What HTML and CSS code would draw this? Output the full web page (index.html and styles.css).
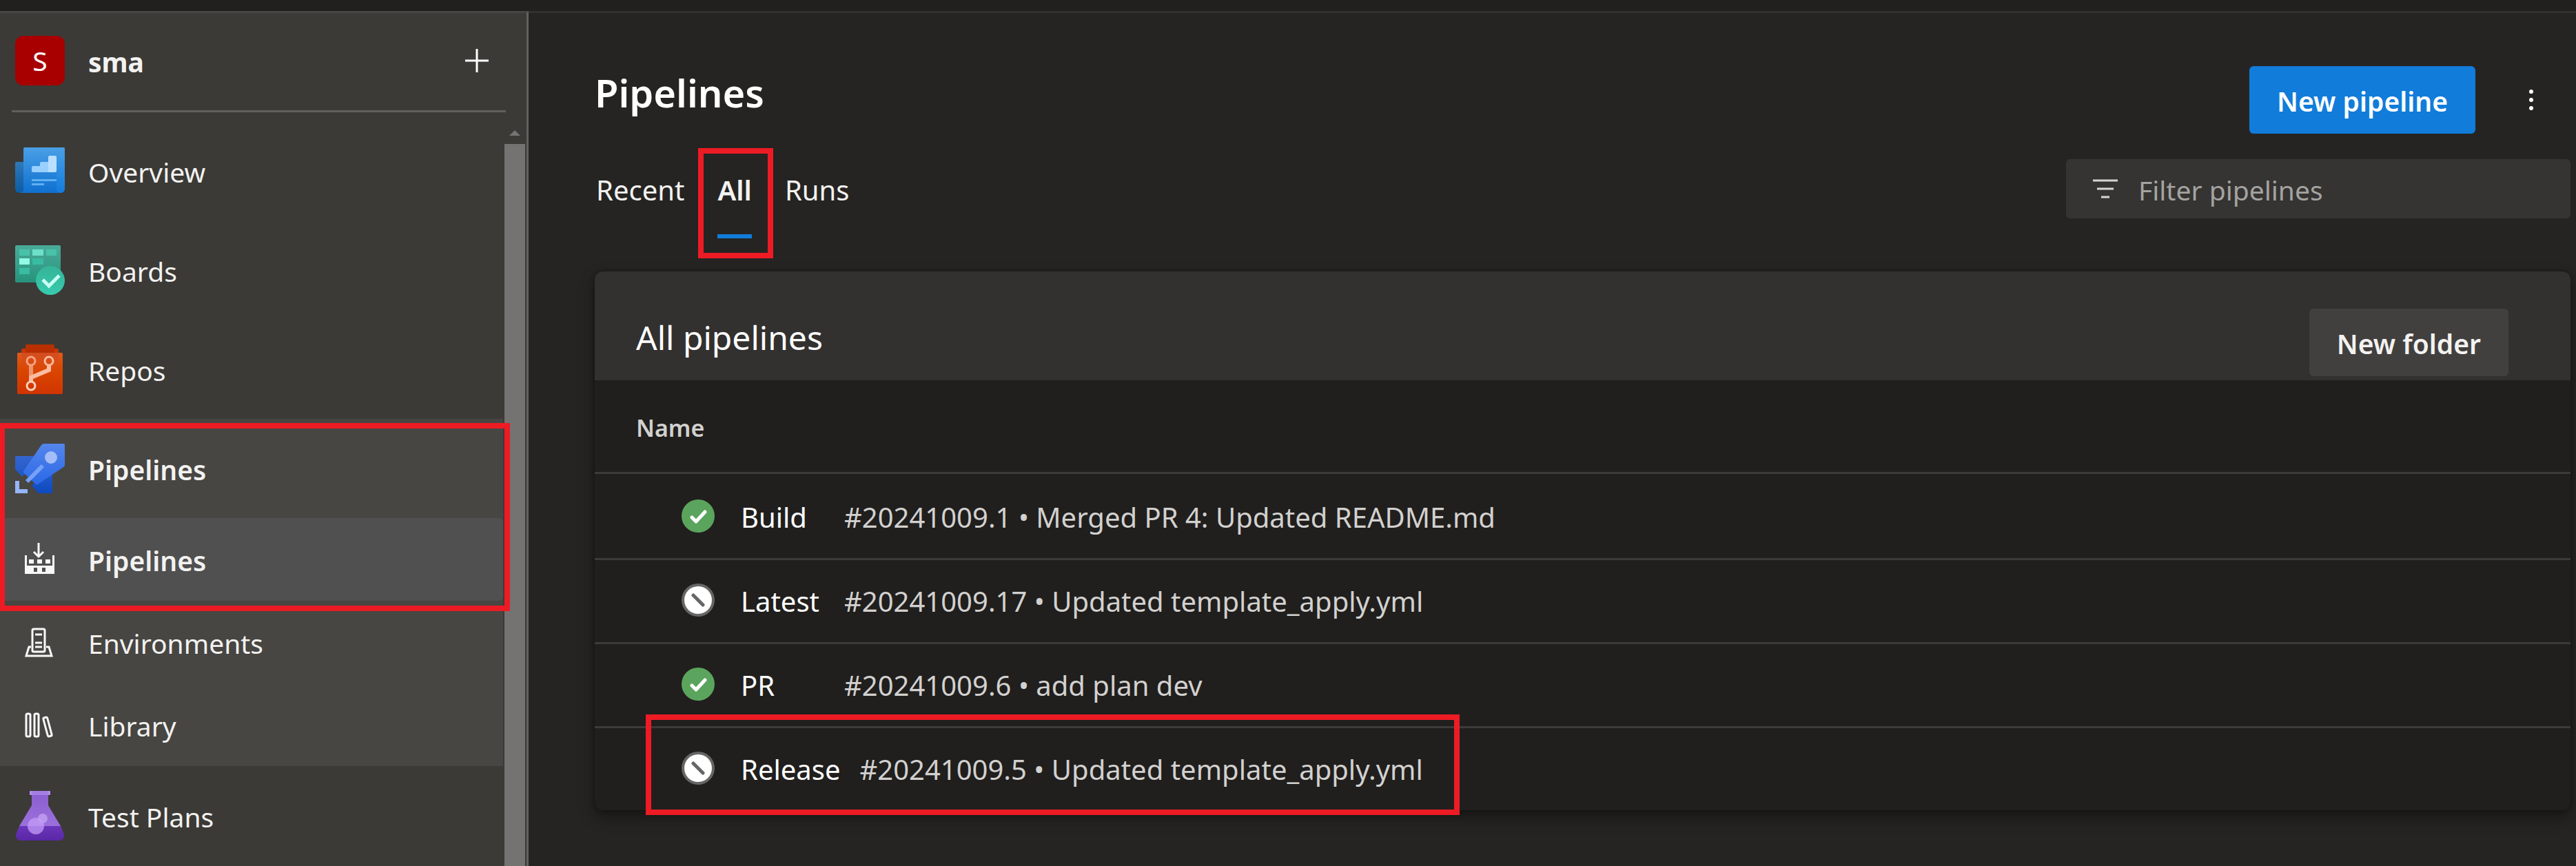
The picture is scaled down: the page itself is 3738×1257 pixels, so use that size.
FILE: index.html
```html
<!DOCTYPE html>
<html lang="en">
<head>
<meta charset="utf-8">
<title>Pipelines</title>
<link rel="stylesheet" href="styles.css">
</head>
<body>
<div class="topbar"></div>
<div class="layout">
  <aside class="sidebar">
    <div class="project">
      <span class="project-avatar">S</span>
      <a class="project-name" href="#">sma</a>
      <button class="project-add" type="button" aria-label="Add">
        <svg width="34" height="34" viewBox="0 0 34 34"><path d="M17 0v34M0 17h34" stroke="#fff" stroke-width="3"/></svg>
      </button>
    </div>
    <div class="nav-area">
      <nav class="nav">
        <a class="nav-item" href="#">
          <svg class="nav-icon" viewBox="0 0 72 72">
            <defs>
              <linearGradient id="ov1" x1="0" y1="0" x2="0" y2="1"><stop offset="0" stop-color="#4a9fe6"/><stop offset="1" stop-color="#0f70cf"/></linearGradient>
              <linearGradient id="ov2" x1="0" y1="0" x2="0" y2="1"><stop offset="0" stop-color="#2f78b8"/><stop offset="1" stop-color="#0b5ba6"/></linearGradient>
              <linearGradient id="ov3" x1="0" y1="0" x2="0" y2="1"><stop offset="0" stop-color="#4a9fe6"/><stop offset="1" stop-color="#127cdd"/></linearGradient>
            </defs>
            <path d="M12 4a2 2 0 0 1 2-2h56a2 2 0 0 1 2 2v58a6 6 0 0 1-6 6H6c4 0 6-3 6-6z" fill="url(#ov1)"/>
            <path d="M60 2h10a2 2 0 0 1 2 2v58a6 6 0 0 1-12 0z" fill="url(#ov3)"/>
            <path d="M2 23h10v39a6 6 0 0 1-12 0V25a2 2 0 0 1 2-2z" fill="url(#ov2)"/>
            <path d="M24 31a2 2 0 0 1 2-2h10v-4a2 2 0 0 1 2-2h10v15H26a2 2 0 0 1-2-2z" fill="#99d0ff"/>
            <path d="M48 16a2 2 0 0 1 2-2h8a2 2 0 0 1 2 2v20a2 2 0 0 1-2 2H48z" fill="#b8dfff"/>
            <path d="M24 48h36v3H24zM24 54h18v3H24z" fill="#5eb0f3"/>
          </svg>
          <span>Overview</span>
        </a>
        <a class="nav-item" href="#">
          <svg class="nav-icon" viewBox="0 0 72 72">
            <defs>
              <linearGradient id="bo1" x1="0" y1="0" x2="0" y2="1"><stop offset="0" stop-color="#4aab99"/><stop offset="1" stop-color="#27937b"/></linearGradient>
              <linearGradient id="bo2" x1="0" y1="0" x2="0" y2="1"><stop offset="0" stop-color="#36b398"/><stop offset="1" stop-color="#37cbae"/></linearGradient>
            </defs>
            <rect width="66" height="54" rx="2" fill="url(#bo1)"/>
            <path d="M6 6h15v9H6zM45 6h15v9H45z" fill="#48c3aa"/>
            <path d="M25 6h16v9H25z" fill="#6ee0ca"/>
            <path d="M6 19h15v9H6z" fill="#92fbe6"/>
            <path d="M25 19h16v9H25zM6 33h15v9H6z" fill="#39bca1"/>
            <circle cx="51" cy="51" r="21" fill="url(#bo2)"/>
            <path d="M40 50l9 9 15-15" fill="none" stroke="#c8fff4" stroke-width="5"/>
          </svg>
          <span>Boards</span>
        </a>
        <a class="nav-item" href="#">
          <svg class="nav-icon" viewBox="0 0 72 72">
            <defs>
              <linearGradient id="re1" x1="0" y1="0" x2="0" y2="1"><stop offset="0" stop-color="#de5a1e"/><stop offset=".4" stop-color="#da4700"/><stop offset="1" stop-color="#d13400"/></linearGradient>
              <linearGradient id="re2" x1="0" y1="0" x2="0" y2="1"><stop offset="0" stop-color="#d24d22"/><stop offset="1" stop-color="#da4700" stop-opacity="0"/></linearGradient>
            </defs>
            <path d="M15 8V2a2 2 0 0 1 2-2h38a2 2 0 0 1 2 2v6z" fill="#b82f00"/>
            <path d="M9 14V8a2 2 0 0 1 2-2h50a2 2 0 0 1 2 2v6z" fill="#cc3500"/>
            <path d="M15 6h42v6H15z" fill="#b92e00"/>
            <rect x="3" y="12" width="66" height="60" rx="2" fill="url(#re1)"/>
            <path d="M9 12h54v34H9z" fill="url(#re2)"/>
            <path d="M23 31v15" stroke="#ee9470" stroke-width="6"/>
            <path d="M49 30v7L23 48v6" fill="none" stroke="#fcbca2" stroke-width="6"/>
            <circle cx="23" cy="24" r="6" fill="none" stroke="#f6a081" stroke-width="3"/>
            <circle cx="49" cy="24" r="6" fill="none" stroke="#fcb99e" stroke-width="3"/>
            <circle cx="23" cy="60" r="6" fill="none" stroke="#ffd0bd" stroke-width="3"/>
          </svg>
          <span>Repos</span>
        </a>
        <div class="nav-group">
          <a class="nav-item strong" href="#">
            <svg class="nav-icon" viewBox="0 0 72 72">
              <defs>
                <linearGradient id="pi1" x1="0" y1="0" x2="0" y2="1"><stop offset="0" stop-color="#5485ec"/><stop offset="1" stop-color="#2a69e6"/></linearGradient>
                <linearGradient id="pi2" x1="0" y1="0" x2="0" y2="1"><stop offset="0" stop-color="#3566cf"/><stop offset="1" stop-color="#0d4ac0"/></linearGradient>
              </defs>
              <path d="M2 18h26L14 44l-4 4L0 37V20a2 2 0 0 1 2-2zM54 44v26a2 2 0 0 1-2 2H34L24 61l8-8z" fill="url(#pi2)"/>
              <path d="M38 2q2-2 4-2h28a2 2 0 0 1 2 2v29q0 2-2 3L33 59q-2 1-3 0L13 43q-2-2-1-3z" fill="url(#pi1)"/>
              <circle cx="52" cy="20" r="9" fill="#a3bdf8"/>
              <path d="M17 55l23-23" stroke="#76a1fa" stroke-width="6"/>
              <path d="M0 54h6v12h12v6H0z" fill="#95b5f8"/>
            </svg>
            <span>Pipelines</span>
          </a>
          <a class="nav-item sub selected strong" href="#">
            <svg class="nav-icon" viewBox="0 0 72 72" fill="none">
              <path d="M34 12v19M27 25l7 7 7-7" stroke="#f8f8f8" stroke-width="3"/>
              <path fill="#f8f8f8" fill-rule="evenodd" d="M14 30h3v15h37V30h3v27H14zM27 48v6h5v-6zM39 48v6h5v-6zM20 36h7v6h-7zM32 36h7v6h-7zM44 36h7v6h-7z"/>
            </svg>
            <span>Pipelines</span>
          </a>
          <a class="nav-item sub" href="#">
            <svg class="nav-icon" viewBox="0 0 72 72" fill="none" stroke="#f8f8f8" stroke-width="3">
              <rect x="25" y="17" width="18" height="33" rx="2"/>
              <path d="M29 25h10M29 37h10M29 43h10M23 43h-3l-4 13h37l-4-13h-4"/>
            </svg>
            <span>Environments</span>
          </a>
          <a class="nav-item sub" href="#">
            <svg class="nav-icon" viewBox="0 0 72 72" fill="none" stroke="#f8f8f8" stroke-width="3">
              <rect x="16" y="20" width="6" height="33" rx="2"/>
              <rect x="28" y="20" width="6" height="33" rx="2"/>
              <rect x="44" y="25" width="6" height="28" rx="2" transform="rotate(-15 47 39)"/>
            </svg>
            <span>Library</span>
          </a>
          <div class="callout callout-nav"></div>
        </div>
        <a class="nav-item" href="#">
          <svg class="nav-icon" viewBox="0 0 72 72">
            <defs>
              <linearGradient id="te1" x1="0" y1="0" x2="0" y2="1"><stop offset="0" stop-color="#8c5fd0"/><stop offset="1" stop-color="#9c70dc"/></linearGradient>
              <linearGradient id="te2" x1="0" y1="0" x2="0" y2="1"><stop offset="0" stop-color="#6b36ba"/><stop offset="1" stop-color="#5a27a6"/></linearGradient>
            </defs>
            <path d="M24 4h24v17l18 30H6l18-30z" fill="url(#te1)"/>
            <path d="M6 51h60l4 10c3 6-1 11-6 11H8c-5 0-9-5-6-11z" fill="url(#te2)"/>
            <rect x="21" width="30" height="6" rx="1" fill="#b28ff0"/>
            <path d="M24 0h24v6H24z" fill="#a47ee2"/>
            <circle cx="40" cy="40" r="7" fill="#c3a2f0" opacity=".8"/>
            <circle cx="30" cy="51" r="12" fill="#c49cf8" opacity=".75"/>
          </svg>
          <span>Test Plans</span>
        </a>
      </nav>
      <div class="scroll" aria-hidden="true">
        <svg class="scroll-arrow" width="16" height="8" viewBox="0 0 16 8"><path d="M8 0l8 8H0z" fill="#757472"/></svg>
        <div class="scroll-thumb"></div>
      </div>
    </div>
  </aside>

  <main class="main">
    <header class="page-head">
      <h1>Pipelines</h1>
      <button class="btn btn-primary" type="button">New pipeline</button>
      <button class="more" type="button" aria-label="More actions">
        <svg width="8" height="32" viewBox="0 0 8 32" fill="#fff"><circle cx="4" cy="4" r="3"/><circle cx="4" cy="16" r="3"/><circle cx="4" cy="28" r="3"/></svg>
      </button>
    </header>

    <div class="toolbar">
      <div class="tabs" role="tablist">
        <button class="tab" type="button" role="tab">Recent</button>
        <button class="tab active" type="button" role="tab" aria-selected="true">All<span class="callout callout-tab"></span></button>
        <button class="tab" type="button" role="tab">Runs</button>
      </div>
      <label class="filter">
        <svg width="36" height="28" viewBox="0 0 36 28"><path d="M0 2h36M6 14h24M12 26h12" stroke="#d6d5d3" stroke-width="3"/></svg>
        <input type="text" placeholder="Filter pipelines" aria-label="Filter pipelines">
      </label>
    </div>

    <section class="card">
      <div class="card-head">
        <h2>All pipelines</h2>
        <button class="btn" type="button">New folder</button>
      </div>
      <table class="runs">
        <thead><tr><th scope="col">Name</th></tr></thead>
        <tbody>
          <tr><td><div class="run">
            <svg class="status" viewBox="0 0 48 48"><circle cx="24" cy="24" r="24" fill="#5aa45e"/><path d="M15 26l6 6 13-14" fill="none" stroke="#fff" stroke-width="5" stroke-linecap="round" stroke-linejoin="round"/></svg>
            <a class="run-name" href="#">Build</a><a class="run-last" href="#">#20241009.1 • Merged PR 4: Updated README.md</a>
          </div></td></tr>
          <tr><td><div class="run">
            <svg class="status" viewBox="0 0 48 48"><circle cx="24" cy="24" r="24" fill="#666"/><circle cx="24" cy="24" r="20" fill="#fff"/><path d="M17 17l14 14" stroke="#666" stroke-width="5" stroke-linecap="round"/></svg>
            <a class="run-name" href="#">Latest</a><a class="run-last" href="#">#20241009.17 • Updated template_apply.yml</a>
          </div></td></tr>
          <tr><td><div class="run">
            <svg class="status" viewBox="0 0 48 48"><circle cx="24" cy="24" r="24" fill="#5aa45e"/><path d="M15 26l6 6 13-14" fill="none" stroke="#fff" stroke-width="5" stroke-linecap="round" stroke-linejoin="round"/></svg>
            <a class="run-name" href="#">PR</a><a class="run-last" href="#">#20241009.6 • add plan dev</a>
          </div></td></tr>
          <tr><td><div class="run">
            <svg class="status" viewBox="0 0 48 48"><circle cx="24" cy="24" r="24" fill="#666"/><circle cx="24" cy="24" r="20" fill="#fff"/><path d="M17 17l14 14" stroke="#666" stroke-width="5" stroke-linecap="round"/></svg>
            <a class="run-name" href="#">Release</a><a class="run-last" href="#">#20241009.5 • Updated template_apply.yml</a>
            <span class="callout callout-run"></span>
          </div></td></tr>
        </tbody>
      </table>
    </section>
  </main>
</div>
</body>
</html>
```
FILE: styles.css
```css
* { box-sizing: border-box; }

body {
  margin: 0;
  min-height: 100vh;
  display: flex;
  flex-direction: column;
  background: #252422;
  color: #f3f2f1;
  font: 40px/56px "Segoe UI", "Noto Sans", "Open Sans", sans-serif;
}

a { color: inherit; text-decoration: none; }

button {
  border: 0;
  padding: 0;
  background: none;
  color: inherit;
  font: inherit;
}

svg { display: block; flex: none; }

h1, h2 { margin: 0; color: #fff; }

.topbar { height: 16px; background: #21201e; }

.layout { flex: 1; display: flex; }

/* Sidebar */
.sidebar {
  width: 767px;
  flex: none;
  display: flex;
  flex-direction: column;
  background: #3b3a37;
  border-top: 3px solid #484745;
  border-right: 3px solid #62615f;
  font-size: 39px;
}

.project {
  display: flex;
  align-items: center;
  margin: 0 30px 13px 17px;
  padding: 33px 25px 36px 5px;
  border-bottom: 3px solid #605f5d;
}

.project-avatar {
  width: 72px;
  height: 72px;
  border-radius: 12px;
  background: #a80000;
  color: #fff;
  line-height: 72px;
  text-align: center;
}

.project-name { flex: 1; margin-left: 34px; padding-top: 4px; font-weight: 700; }

.nav-area { flex: 1; display: flex; gap: 2px; padding-right: 2px; }

.nav { flex: 1; }

.nav-item {
  display: flex;
  align-items: center;
  gap: 34px;
  height: 144px;
  padding-left: 22px;
}

.nav-item span { padding-top: 4px; }
.nav-item.sub { height: 120px; }
.strong { font-weight: 600; }
.selected { background: #505050; border-radius: 0 6px 6px 0; }
.nav-icon { width: 72px; height: 72px; }

.nav-group { position: relative; background: #474643; }

.scroll { width: 30px; display: flex; flex-direction: column; }
.scroll-arrow { margin: 13px 7px 12px; }
.scroll-thumb { flex: 1; background: #747371; }

/* Highlight frames */
.callout { position: absolute; border: 8px solid #ed1c24; pointer-events: none; }
.callout-nav { top: 6px; right: -10px; bottom: 225px; left: -1px; }
.callout-tab { top: 13px; right: -31px; bottom: -29px; left: -28px; }
.callout-run { top: -20px; right: -53px; bottom: -10px; left: -52px; }

/* Main column */
.main {
  flex: 1;
  min-width: 0;
  padding: 77px 8px 0 96px;
  border-top: 3px solid #32312f;
}

.page-head { display: flex; align-items: flex-start; }

h1 { flex: 1; font-size: 56px; line-height: 76px; font-weight: 600; }

.btn {
  height: 98px;
  padding: 4px 40px 0;
  border-radius: 6px;
  background: #41403e;
  font-size: 39px;
  font-weight: 600;
}

.btn-primary { background: #117cd9; color: #fff; }

.more {
  width: 98px;
  height: 98px;
  margin: 0 8px 0 32px;
  display: flex;
  align-items: center;
  justify-content: center;
}

.toolbar {
  display: flex;
  align-items: center;
  justify-content: space-between;
  margin: 8px 0 48px;
}

.tabs { display: flex; gap: 48px; padding-left: 2px; }

.tab { position: relative; height: 144px; padding-top: 4px; }

.tab.active { font-weight: 600; box-shadow: inset 0 -6px #117cd9; }

.filter {
  display: flex;
  align-items: center;
  gap: 30px;
  width: 732px;
  height: 86px;
  padding: 0 39px;
  border-radius: 6px;
  background: #353432;
}

.filter input {
  flex: 1;
  min-width: 0;
  padding: 4px 0 0;
  border: 0;
  outline: 0;
  background: none;
  color: #f3f2f1;
  font: inherit;
  font-size: 39px;
}

.filter input::placeholder { color: #a4a3a1; opacity: 1; }

.card {
  border-radius: 12px;
  background: #211f1e;
  box-shadow: 0 10px 22px rgba(0, 0, 0, .4), 0 0 6px rgba(0, 0, 0, .3);
}

.card-head {
  display: flex;
  align-items: flex-start;
  justify-content: space-between;
  padding: 54px 90px 6px 60px;
  border-radius: 12px 12px 0 0;
  background: #323130;
}

h2 { padding-top: 6px; font-size: 48px; line-height: 72px; font-weight: 400; }

.runs { width: 100%; border-spacing: 0; }

.runs th {
  height: 136px;
  padding: 4px 60px 0;
  border-bottom: 3px solid #3c3b39;
  color: #d2d1cf;
  font-size: 34px;
  font-weight: 600;
  text-align: left;
}

.runs td { height: 122px; padding: 0 126px; }
.runs tr + tr td { border-top: 3px solid #3c3b39; padding-bottom: 3px; }

.run {
  position: relative;
  display: flex;
  align-items: center;
  width: max-content;
  height: 116px;
}

.status { width: 48px; height: 48px; margin-right: 38px; }
.run-name { min-width: 122px; margin-right: 28px; padding-top: 4px; color: #fff; }
.run-last { padding-top: 4px; color: #d2d1cf; }
```
